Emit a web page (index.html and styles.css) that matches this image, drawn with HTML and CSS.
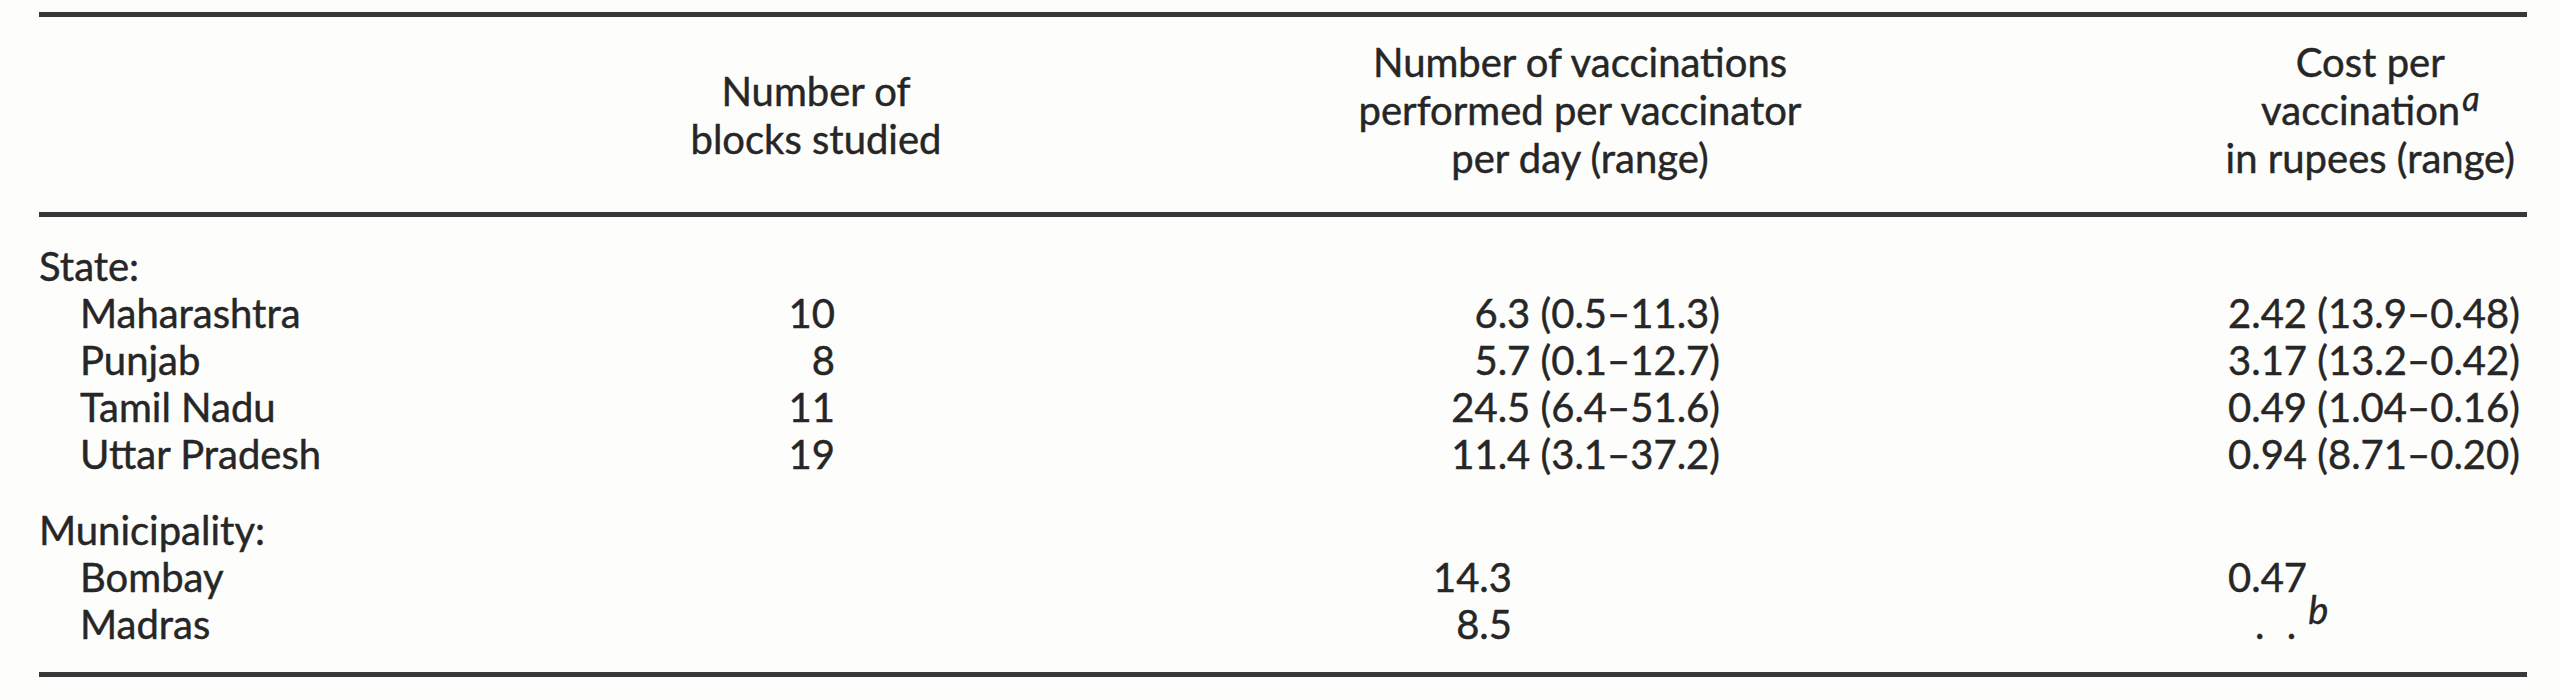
FILE: index.html
```html
<!DOCTYPE html>
<html lang="en">
<head>
<meta charset="utf-8">
<title>Vaccination cost table</title>
<link rel="stylesheet" href="styles.css">
</head>
<body>
<div class="table">
  <div class="rule"></div>
  <div class="row head">
    <div class="cell"></div>
    <div class="cell h1">Number of<br>blocks studied</div>
    <div class="cell h2">Number of vaccinations<br>performed per vaccinator<br>per day (range)</div>
    <div class="cell h3">Cost per<br>vaccination<i class="sup">a</i><br>in rupees (range)</div>
  </div>
  <div class="rule"></div>
  <div class="body">
    <div class="group">
      <div class="row"><div class="cell lab">State:</div><div class="cell"></div><div class="cell"></div><div class="cell"></div></div>
      <div class="row"><div class="cell lab sub">Maharashtra</div><div class="cell c1">10</div><div class="cell c2">6.3 (0.5–11.3)</div><div class="cell c3">2.42 (13.9–0.48)</div></div>
      <div class="row"><div class="cell lab sub">Punjab</div><div class="cell c1">8</div><div class="cell c2">5.7 (0.1–12.7)</div><div class="cell c3">3.17 (13.2–0.42)</div></div>
      <div class="row"><div class="cell lab sub">Tamil Nadu</div><div class="cell c1">11</div><div class="cell c2">24.5 (6.4–51.6)</div><div class="cell c3">0.49 (1.04–0.16)</div></div>
      <div class="row"><div class="cell lab sub">Uttar Pradesh</div><div class="cell c1">19</div><div class="cell c2">11.4 (3.1–37.2)</div><div class="cell c3">0.94 (8.71–0.20)</div></div>
    </div>
    <div class="group">
      <div class="row"><div class="cell lab">Municipality:</div><div class="cell"></div><div class="cell"></div><div class="cell"></div></div>
      <div class="row"><div class="cell lab sub">Bombay</div><div class="cell c1"></div><div class="cell c2 solo">14.3</div><div class="cell c3">0.47</div></div>
      <div class="row"><div class="cell lab sub">Madras</div><div class="cell c1"></div><div class="cell c2 solo">8.5</div><div class="cell c3 na"><span class="dots">. .</span><i class="sup fnb">b</i></div></div>
    </div>
  </div>
  <div class="rule"></div>
</div>
</body>
</html>
```

FILE: styles.css
```css
html, body {
  margin: 0;
  padding: 0;
  background: #fdfdfc;
}

body {
  padding: 12px 33px 0 39px;
  font-family: Lato, "Open Sans", sans-serif;
  font-size: 40px;
  color: #262626;
  -webkit-text-stroke: 0.45px #262626;
}

.table {
  width: 2488px;
}

.rule {
  height: 5px;
  background: #383838;
}

.row {
  display: grid;
  grid-template-columns: 561px 432px 1096px 399px;
}

.head {
  padding: 21px 0 30px;
  line-height: 48px;
  align-items: start;
}

.h1 {
  text-align: center;
  margin-top: 29px;
}

.h2 {
  text-align: center;
}

.h3 {
  text-align: center;
  justify-self: end;
  padding-right: 12px;
}

.sup {
  font-style: italic;
  font-size: 34px;
  line-height: 0;
  vertical-align: 14px;
  margin-left: 2px;
}

.body {
  padding: 26px 0 24px;
  line-height: 47px;
}

.group + .group {
  margin-top: 29px;
}

.lab {
  white-space: nowrap;
}

.sub {
  padding-left: 41px;
}

.c1 {
  text-align: right;
  padding-right: 197px;
}

.c2 {
  text-align: right;
  padding-right: 408px;
}

.c2.solo {
  padding-right: 616px;
}

.c3 {
  text-align: left;
  padding-left: 100px;
  white-space: nowrap;
}

.c3.na {
  padding-left: 127px;
}

.dots {
  letter-spacing: 6px;
}

.fnb {
  font-size: 38px;
  margin-left: 6px;
  vertical-align: 15px;
}
```
